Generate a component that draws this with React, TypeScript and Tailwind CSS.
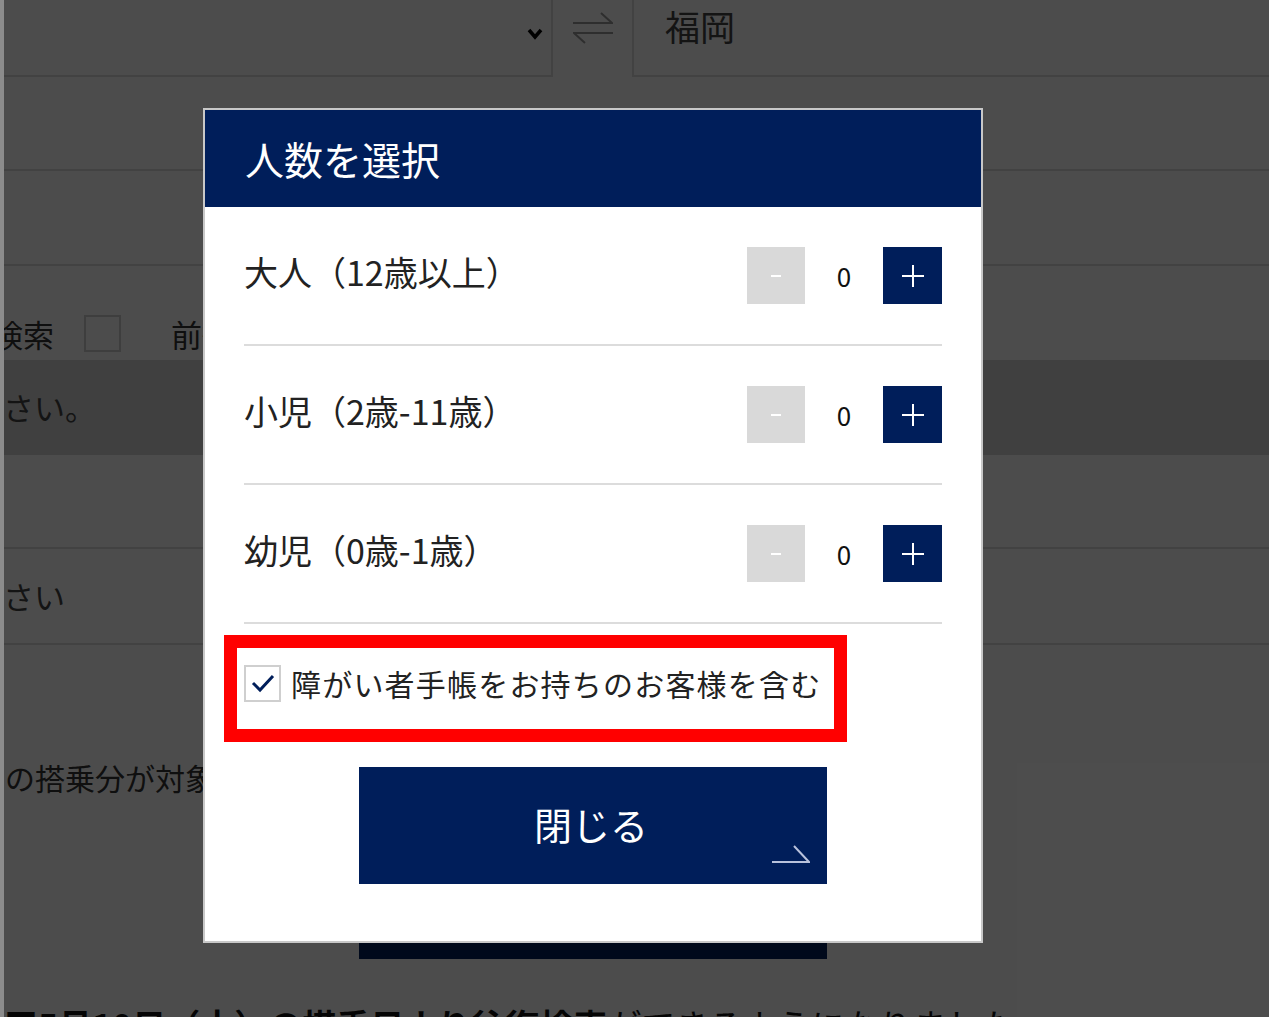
import React from "react";

const FONT = { fontFamily: '"Noto Sans CJK JP", "Noto Sans", sans-serif' };

function Counter({ label }: { label: string }) {
  return (
    <div className="h-[139px] border-b-2 border-[#dcdcdc] flex items-center justify-between">
      <span className="text-[34px] text-[#222] leading-none -mt-[8px]">{label}</span>
      <div className="flex items-center">
        <button className="w-[58px] h-[57px] bg-[#d9d9d9] flex items-center justify-center">
          <span className="block w-[10px] h-[2px] bg-white" />
        </button>
        <span className="w-[78px] text-center text-[26px] text-[#111] leading-none">0</span>
        <button className="w-[59px] h-[57px] bg-[#001e5a] flex items-center justify-center">
          <svg width="22" height="22" viewBox="0 0 22 22">
            <path d="M11 0V22M0 11H22" stroke="#fff" strokeWidth="2" />
          </svg>
        </button>
      </div>
    </div>
  );
}

export default function App() {
  return (
    <div className="w-[1269px] h-[1017px] flex overflow-hidden" style={FONT}>
      <div className="w-[4px] h-full bg-[#8c8c8c] shrink-0" />
      <div className="relative flex-1 h-full overflow-hidden bg-white">
        {/* underlying page */}
        <div className="flex flex-col text-[#333]">
          <div className="flex h-[77px]">
            <div className="w-[549px] h-full border-r-2 border-b-2 border-[#dcdcdc] flex items-center justify-end pr-[8px] pb-[8px]">
              <svg width="16" height="12" viewBox="0 0 16 12">
                <path d="M2 2L8 9L14 2" stroke="#000" strokeWidth="3.5" fill="none" />
              </svg>
            </div>
            <div className="w-[79px] h-full flex items-start justify-center pt-[12px]">
              <svg width="40" height="32" viewBox="0 0 40 32">
                <path d="M0 11H39L28 1M40 21H1L12 31" stroke="#9a9a9a" strokeWidth="2" fill="none" />
              </svg>
            </div>
            <div className="flex-1 h-full border-l-2 border-b-2 border-[#dcdcdc] pl-[31px] pt-[3px] text-[35px] leading-[46px] text-[#444]">
              福岡
            </div>
          </div>
          <div className="h-[94px] border-b-2 border-[#dcdcdc]" />
          <div className="h-[95px] border-b-2 border-[#dcdcdc]" />
          <div className="h-[94px] flex items-start pt-[49px]">
            <span className="text-[31px] leading-[37px] -ml-[74px] text-[#333]">往復検索</span>
            <span className="ml-[30px] w-[37px] h-[37px] border-2 border-[#cfcfcf] bg-white" />
            <span className="ml-[50px] text-[31px] leading-[37px]">前後の日付</span>
          </div>
          <div className="h-[95px] bg-[#d6d6d6] flex items-center">
            <span className="text-[31px] -ml-[32px] text-[#444]">ださい。</span>
          </div>
          <div className="h-[94px] border-b-2 border-[#dcdcdc]" />
          <div className="h-[96px] border-b-2 border-[#dcdcdc] flex items-center">
            <span className="text-[31px] -ml-[32px] text-[#444]">ださい</span>
          </div>
          <div className="mt-[114px] text-[30px] leading-[36px] pl-[1px] text-[#333]">の搭乗分が対象となります</div>
          <div className="mt-[88px] ml-[355px] w-[468px] h-[76px] bg-[#001e5a]" />
          <div className="mt-[44px] text-[34px] leading-[44px] text-[#111] whitespace-nowrap">
            <span className="font-bold">■5月10日（土）の搭乗日より往復検索</span>
            <span>ができるようになりました</span>
          </div>
        </div>

        {/* overlay */}
        <div className="absolute inset-0 bg-black/70" />

        {/* modal */}
        <div className="absolute left-[199px] top-[108px] w-[780px] h-[835px] border-2 border-[#c8c8c8] bg-white flex flex-col">
          <div className="h-[97px] bg-[#001e5a] pl-[40px] flex items-center text-white text-[39px] leading-none">
            人数を選択
          </div>
          <div className="px-[39px] flex flex-col">
            <Counter label="大人（12歳以上）" />
            <Counter label="小児（2歳-11歳）" />
            <Counter label="幼児（0歳-1歳）" />
            <div className="relative h-[118px] flex items-center">
              <span className="w-[37px] h-[37px] border-2 border-[#cfcfcf] bg-white flex items-center justify-center">
                <svg width="24" height="20" viewBox="0 0 24 20">
                  <path d="M2 10L9 17L22 3" stroke="#001e5a" strokeWidth="3" fill="none" />
                </svg>
              </span>
              <span className="ml-[10px] text-[30px] tracking-[1.2px] text-[#222] leading-none">
                障がい者手帳をお持ちのお客様を含む
              </span>
              <div className="absolute -left-[20px] top-[11px] w-[623px] h-[107px] border-[13px] border-[#ff0000]" />
            </div>
            <button className="relative mx-auto mt-[25px] w-[468px] h-[117px] bg-[#001e5a] flex items-center justify-center text-white text-[38px] leading-none">
              <span className="-ml-[4px] -mt-[4px]">閉じる</span>
              <svg className="absolute right-[17px] bottom-[21px]" width="38" height="18" viewBox="0 0 38 18">
                <path d="M0 17H37L22 1" stroke="#b8c2dc" strokeWidth="2" fill="none" />
              </svg>
            </button>
          </div>
        </div>
      </div>
    </div>
  );
}
